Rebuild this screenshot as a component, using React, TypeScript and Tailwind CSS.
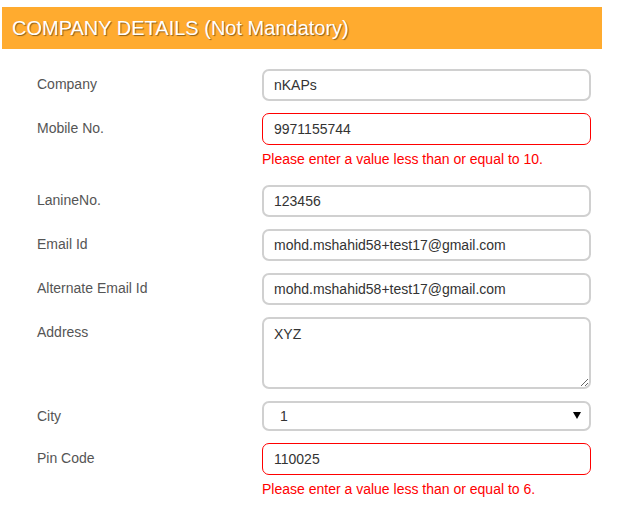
import React from 'react'

type Field = {
  label: string
  value: string
  kind?: 'input' | 'textarea' | 'select'
  error?: string
}

const fields: Field[] = [
  { label: 'Company', value: 'nKAPs' },
  { label: 'Mobile No.', value: '9971155744', error: 'Please enter a value less than or equal to 10.' },
  { label: 'LanineNo.', value: '123456' },
  { label: 'Email Id', value: 'mohd.mshahid58+test17@gmail.com' },
  { label: 'Alternate Email Id', value: 'mohd.mshahid58+test17@gmail.com' },
  { label: 'Address', value: 'XYZ', kind: 'textarea' },
  { label: 'City', value: '1', kind: 'select' },
  { label: 'Pin Code', value: '110025', error: 'Please enter a value less than or equal to 6.' },
]

function Control({ field }: { field: Field }) {
  const border = field.error ? 'border border-[#ff0000]' : 'border-2 border-[#d0d0d0]'
  const base = `block w-[329px] rounded-[7px] bg-white text-[14px] text-[#333] outline-none ${border}`

  if (field.kind === 'textarea') {
    return <textarea defaultValue={field.value} className={`${base} h-[72px] px-[10px] py-[5px] leading-[20px]`} />
  }
  if (field.kind === 'select') {
    return (
      <div className="relative w-[329px]">
        <select defaultValue={field.value} className={`${base} h-[30px] appearance-none pl-[16px]`}>
          <option value="1">1</option>
        </select>
        <span className="pointer-events-none absolute right-[10px] top-[11px] h-0 w-0 border-x-[4px] border-t-[7px] border-x-transparent border-t-black" />
      </div>
    )
  }
  return (
    <input
      defaultValue={field.value}
      className={`${base} h-[32px] ${field.error ? 'px-[11px]' : 'px-[10px]'}`}
    />
  )
}

export default function App() {
  return (
    <div className="min-h-[532px] bg-white pl-[2px] pt-[7px] font-['Liberation_Sans',Arial,sans-serif]">
      <div className="w-[600px]">
        <div className="flex h-[42px] items-center bg-[#ffab2f] pl-[10px]">
          <h2 className="text-[20px] text-white [text-shadow:1px_1px_1px_rgba(0,0,0,0.45)]">
            COMPANY DETAILS (Not Mandatory)
          </h2>
        </div>

        <div className="flex flex-col gap-[12px] pt-[20px]">
          {fields.map((field) => (
            <div key={field.label} className="flex">
              <label className="w-[260px] shrink-0 pl-[35px] pt-[7px] text-[14px] leading-[16px] text-[#555]">
                {field.label}
              </label>
              <div className="flex flex-col">
                <Control field={field} />
                {field.error && (
                  <p className="h-[28px] pt-[4px] text-[14px] leading-[20px] text-[#ff0000]">{field.error}</p>
                )}
              </div>
            </div>
          ))}
        </div>
      </div>
    </div>
  )
}
